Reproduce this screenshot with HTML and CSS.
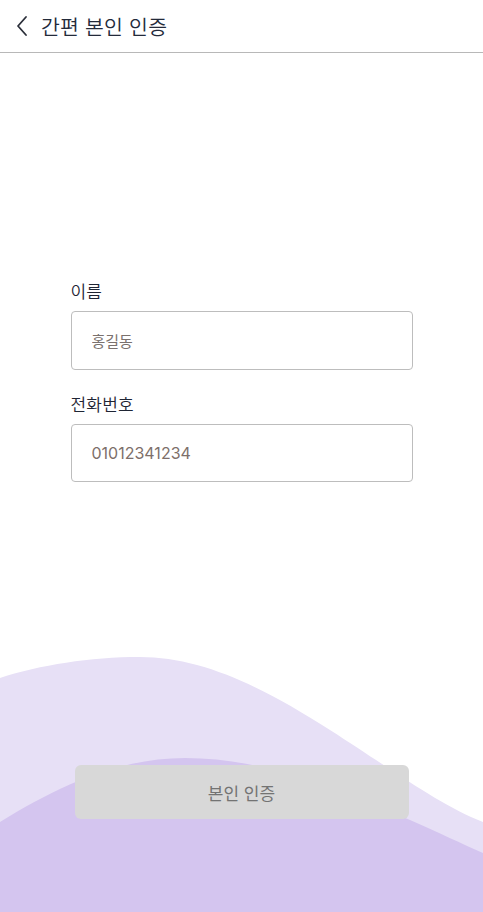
FILE: index.html
```html
<!DOCTYPE html>
<html lang="ko">
<head>
<meta charset="utf-8">
<title>간편 본인 인증</title>
<link rel="stylesheet" href="styles.css">
</head>
<body>
<div class="page">
  <header class="topbar">
    <button class="back" aria-label="뒤로">
      <svg width="14" height="22" viewBox="0 0 14 22"><path d="M11 2 L3 11 L11 20" fill="none" stroke="#2b2f3a" stroke-width="1.8" stroke-linecap="round" stroke-linejoin="round"/></svg>
    </button>
    <h1 class="title">간편 본인 인증</h1>
  </header>

  <svg class="waves" width="483" height="272" viewBox="0 0 483 272" preserveAspectRatio="none" aria-hidden="true">
    <path d="M0,38 C40,25 90,17 140,17 C200,17 260,45 330,90 C400,135 440,165 483,182 V272 H0 Z" fill="#e7e0f6"/>
    <path d="M0,182 C60,145 120,118 185,118 C260,118 330,145 410,180 C440,193 460,203 483,213 V272 H0 Z" fill="#d4c5ef"/>
  </svg>

  <main class="form">
    <label class="label" for="name">이름</label>
    <div class="field"><input id="name" class="input name" type="text" placeholder="홍길동"></div>
    <label class="label second" for="phone">전화번호</label>
    <div class="field"><input id="phone" class="input phone" type="text" placeholder="01012341234"></div>
  </main>

  <div class="actions">
    <button class="submit">본인 인증</button>
  </div>
</div>
</body>
</html>
```

FILE: styles.css
```css
* { box-sizing: border-box; }
html, body { margin: 0; padding: 0; }
body {
  font-family: "Noto Sans CJK KR", "Noto Sans", sans-serif;
  background: #fff;
}
.page {
  position: relative;
  height: 912px;
  overflow: hidden;
  display: flex;
  flex-direction: column;
}
.topbar {
  height: 53px;
  border-bottom: 1px solid #b8b8b8;
  display: flex;
  align-items: center;
  padding-left: 15px;
}
.back {
  border: 0;
  background: none;
  padding: 0;
  width: 14px;
  height: 22px;
  margin-right: 12px;
  display: flex;
}
.title {
  margin: 0;
  font-size: 20.5px;
  font-weight: 350;
  color: #232a3a;
  line-height: 28px;
  letter-spacing: 0.2px;
}
.waves {
  position: absolute;
  left: 0;
  bottom: 0;
  z-index: 0;
}
.form {
  position: relative;
  z-index: 1;
  width: 342px;
  margin: 0 auto;
  padding-top: 227px;
  display: flex;
  flex-direction: column;
}
.label {
  font-size: 17px;
  font-weight: 350;
  line-height: 22px;
  color: #1f2534;
  letter-spacing: 0.2px;
  margin-bottom: 9px;
}
.label.second { margin-top: 23px; }
.field { display: flex; }
.input {
  width: 342px;
  height: 59px;
  border: 1px solid #bdbdbd;
  border-radius: 4px;
  padding: 0 20px;
  font-family: inherit;
  background: #fff;
  outline: none;
}
.input.name { font-size: 15px; }
.input.phone { height: 58px; font-size: 16px; font-family: "Inter", "Noto Sans CJK KR", sans-serif; }
.input.name::placeholder { color: #7a716e; }
.input.phone::placeholder { color: #7d6f6a; }
.actions {
  position: relative;
  z-index: 1;
  margin-top: 283px;
  display: flex;
  justify-content: center;
}
.submit {
  width: 334px;
  height: 54px;
  border: 0;
  border-radius: 6px;
  background: #d8d8d8;
  color: #737373;
  font-family: inherit;
  font-size: 17px;
}
```
